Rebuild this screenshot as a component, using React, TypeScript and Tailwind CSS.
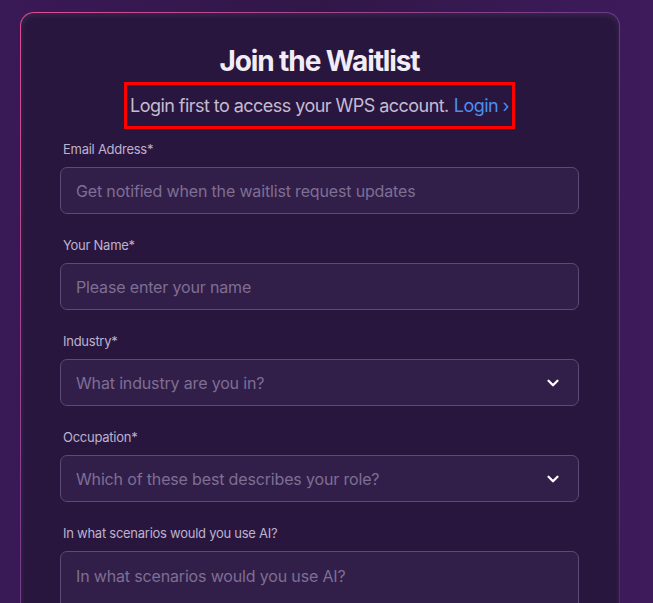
import { ChevronDown } from "lucide-react";

const font = { fontFamily: "Inter, 'Noto Sans', sans-serif" };

function Label({ children }: { children: React.ReactNode }) {
  return (
    <label className="mb-[9px] block pl-[3px] text-[13px] leading-[18px] tracking-[-0.02em] text-[#bdb3cc]">
      {children}
    </label>
  );
}

function Field({
  label,
  placeholder,
  select,
}: {
  label: string;
  placeholder: string;
  select?: boolean;
}) {
  return (
    <div className="mb-[22px]">
      <Label>{label}</Label>
      <div className="flex h-[47px] items-center justify-between rounded-[7px] border border-[#5d4878] bg-[#311f49] pl-[15px] pr-[16px]">
        <span className="text-[16px] tracking-[-0.01em] text-[#7f6e94]">{placeholder}</span>
        {select ? <ChevronDown className="h-[18px] w-[18px] text-white" strokeWidth={3} /> : null}
      </div>
    </div>
  );
}

export default function App() {
  return (
    <div
      className="h-[603px] w-[653px] overflow-hidden bg-gradient-to-r from-[#3a1956] via-[#311748] to-[#3e1b5c] pl-5 pt-3"
      style={font}
    >
      <div className="w-[600px] rounded-[14px] bg-gradient-to-br from-[#e04d93] via-[#6b3a88] to-[#4b2b6b] p-px">
        <div className="h-[620px] rounded-[13px] bg-[#29163f] pl-[39px] pr-[40px] pt-[30px] shadow-[inset_0_2px_6px_rgba(255,255,255,0.08)]">
          <h1 className="text-center text-[28px] font-bold leading-[36px] tracking-[-0.04em] text-[#f1ecf5]">
            Join the Waitlist
          </h1>
          <div className="mt-[3px] mb-[11px] flex justify-center">
            <div className="flex h-[47px] w-[391px] items-center justify-center border-[3px] border-[#ff0000] text-[18px] tracking-[-0.03em] text-[#c5bbd2]">
              <span>Login first to access your WPS account.</span>
              <span className="ml-[5px] text-[#4a8ff0]">Login ›</span>
            </div>
          </div>
          <Field label="Email Address*" placeholder="Get notified when the waitlist request updates" />
          <Field label="Your Name*" placeholder="Please enter your name" />
          <Field label="Industry*" placeholder="What industry are you in?" select />
          <Field label="Occupation*" placeholder="Which of these best describes your role?" select />
          <div>
            <Label>In what scenarios would you use AI?</Label>
            <div className="h-[100px] rounded-[7px] border border-[#5d4878] bg-[#311f49] px-[15px] pt-[12px]">
              <span className="text-[16px] tracking-[-0.01em] text-[#7f6e94]">
                In what scenarios would you use AI?
              </span>
            </div>
          </div>
        </div>
      </div>
    </div>
  );
}
